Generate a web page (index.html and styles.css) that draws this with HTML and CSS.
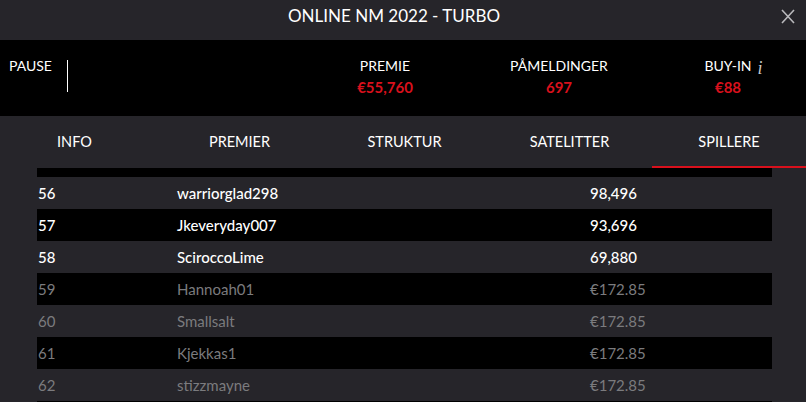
FILE: index.html
```html
<!DOCTYPE html>
<html lang="no">

<head>
    <title>Online NM 2022 - Turbo</title>
    <meta charset="UTF-8">
    <meta name="viewport" content="width=device-width, initial-scale=1.0">
    <link rel="stylesheet" href="styles.css">
</head>

<body>
    <header class="topbar">
        <h1 class="title">ONLINE NM 2022 - TURBO</h1>
        <button type="button" class="close" aria-label="Lukk">
            <svg width="14" height="15" viewBox="0 0 14 15">
                <path d="M1 1 L13 14 M13 1 L1 14" stroke="#b9b9bc" stroke-width="1.6" fill="none" />
            </svg>
        </button>
    </header>

    <section class="stats">
        <div class="pause">
            <span class="pause-label">PAUSE</span>
            <span class="pause-line"></span>
        </div>
        <div class="stat">
            <div class="stat-label">PREMIE</div>
            <div class="stat-value">€55,760</div>
        </div>
        <div class="stat">
            <div class="stat-label">PÅMELDINGER</div>
            <div class="stat-value">697</div>
        </div>
        <div class="stat">
            <div class="stat-label">BUY-IN <i class="info-icon">i</i></div>
            <div class="stat-value">€88</div>
        </div>
    </section>

    <nav class="tabs">
        <div class="tab">INFO</div>
        <div class="tab">PREMIER</div>
        <div class="tab">STRUKTUR</div>
        <div class="tab">SATELITTER</div>
        <div class="tab active">SPILLERE</div>
    </nav>

    <div class="players">
        <div class="row row-cut"></div>
        <div class="row live">
            <span>56</span><span>warriorglad298</span><span>98,496</span>
        </div>
        <div class="row live">
            <span>57</span><span>Jkeveryday007</span><span>93,696</span>
        </div>
        <div class="row live">
            <span>58</span><span>SciroccoLime</span><span>69,880</span>
        </div>
        <div class="row out">
            <span>59</span><span>Hannoah01</span><span>€172.85</span>
        </div>
        <div class="row out">
            <span>60</span><span>Smallsalt</span><span>€172.85</span>
        </div>
        <div class="row out">
            <span>61</span><span>Kjekkas1</span><span>€172.85</span>
        </div>
        <div class="row out">
            <span>62</span><span>stizzmayne</span><span>€172.85</span>
        </div>
        <div class="row out"></div>
    </div>
</body>

</html>
```

FILE: styles.css
```css
body {
    margin: 0;
    height: 402px;
    overflow: hidden;
    background: #26252a;
    color: #fff;
    font-family: Lato, "Open Sans", sans-serif;
}

.topbar {
    display: grid;
    grid-template-columns: 1fr auto 1fr;
    align-items: start;
    height: 40px;
    box-sizing: border-box;
    padding-top: 6px;
}

.title {
    grid-column: 2;
    margin: 0;
    padding-right: 18px;
    font-size: 17px;
    line-height: 20px;
    font-weight: 400;
}

.close {
    justify-self: end;
    margin: 3px 11px 0 0;
    padding: 0;
    border: 0;
    background: none;
    line-height: 0;
}

.stats {
    display: grid;
    grid-template-columns: 1fr 110px 150px 100px;
    column-gap: 44px;
    height: 76px;
    box-sizing: border-box;
    padding: 17px 28px 0 9px;
    background: #000;
}

.pause {
    display: flex;
    align-items: flex-start;
}

.pause-label {
    font-size: 14px;
    line-height: 17px;
}

.pause-line {
    width: 1px;
    height: 32px;
    margin: 3px 0 0 15px;
    background: #fff;
}

.stat {
    text-align: center;
}

.stat-label {
    font-size: 14px;
    line-height: 17px;
    white-space: nowrap;
}

.stat-value {
    margin-top: 4px;
    font-size: 15px;
    line-height: 18px;
    font-weight: 700;
    color: #d9101c;
}

.info-icon {
    position: absolute;
    margin: 3px 0 0 6px;
    font-family: "Liberation Serif", serif;
    font-size: 18px;
    line-height: 17px;
    color: #c8c8c8;
}

.tabs {
    display: grid;
    grid-template-columns: repeat(4, 165px) 1fr;
    margin-left: -8px;
    height: 52px;
}

.tab {
    display: flex;
    align-items: center;
    justify-content: center;
    font-size: 14.5px;
    border-bottom: 2px solid transparent;
}

.tab.active {
    border-bottom-color: #d9101c;
}

.players {
    margin: 0 34px 0 37px;
}

.row {
    display: grid;
    grid-template-columns: 139px 413px 1fr;
    align-items: center;
    height: 32px;
    padding-left: 1px;
    font-size: 15px;
}

.row:nth-child(odd) {
    background: #000;
}

.row-cut {
    height: 9px;
}

.row.live {
    font-weight: 500;
    color: #fff;
}

.row.out {
    color: #7b7b7e;
}
```
